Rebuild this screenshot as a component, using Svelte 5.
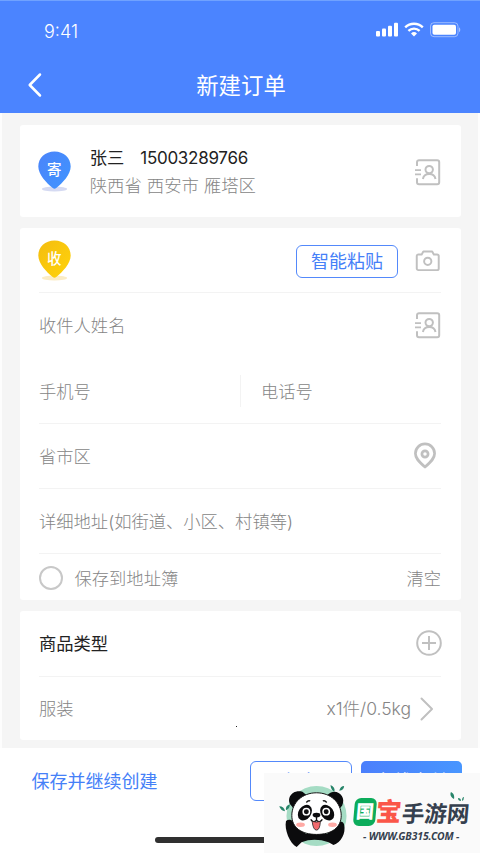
<script lang="ts">
  // New shipping order form: sender card, recipient form, goods list
  // and the action bar pinned at the bottom of the screen.
  const sender = {
    name: '张三',
    phone: '15003289766',
    address: '陕西省 西安市 雁塔区',
  };
  const goods = { kind: '服装', summary: 'x1件/0.5kg' };
</script>

{#snippet contactIcon()}
  <svg class="icon contact" viewBox="0 0 28 28" aria-hidden="true">
    <path d="M4 8V4.200a2 2 0 0 1 2-2h18.200a2 2 0 0 1 2 2v20a2 2 0 0 1-2 2H6a2 2 0 0 1-2-2v-4" />
    <path d="M2 12.200h6M2 16.400h6" stroke-width="1.8" />
    <circle cx="16.200" cy="11.600" r="3.700" />
    <path d="M9.900 21c.6-3.200 2.800-4.900 6.300-4.900s5.700 1.700 6.300 4.900" />
  </svg>
{/snippet}

{#snippet pin(label: string, kind: string)}
  <div class="pin {kind}">
    <svg viewBox="0 0 34 43" aria-hidden="true">
      <defs>
        <linearGradient id="pin-{kind}" x1="0" y1="0" x2="1" y2="1">
          <stop class="from" offset="0" />
          <stop class="to" offset="1" />
        </linearGradient>
      </defs>
      <ellipse class="shadow" cx="17" cy="39.200" rx="13" ry="2.700" />
      <path d="M17 .5C7.300.5.300 7.300.300 15.900c0 8.400 8.400 16.900 14.900 22.300q1.800 1.300 3.600 0c6.500-5.400 14.900-13.900 14.900-22.300C33.700 7.300 26.700.5 17 .5Z" fill="url(#pin-{kind})" />
    </svg>
    <span>{label}</span>
  </div>
{/snippet}

<div class="screen">
  <header>
    <div class="status">
      <time>9:41</time>
      <svg width="86" height="18" viewBox="0 0 86 18" aria-hidden="true">
        <g fill="#fff">
          <rect x="1" y="10" width="4" height="5.500" rx="1" />
          <rect x="7" y="7.500" width="4" height="8" rx="1" />
          <rect x="13" y="4.700" width="4" height="10.800" rx="1" />
          <rect x="19" y="1.800" width="4" height="13.700" rx="1" />
          <path d="m39 15.500-3-3a4.300 4.300 0 0 1 6 0Z" />
          <rect x="57.500" y="3.700" width="23.500" height="10" rx="1.800" />
          <path d="M84 6.300c1.700.8 1.700 4.200 0 5Z" opacity=".5" />
        </g>
        <path d="M30.200 6.300a12.800 12.800 0 0 1 17.600 0M33.400 9.800a8.200 8.200 0 0 1 11.200 0" fill="none" stroke="#fff" stroke-width="2.400" />
        <rect x="55.500" y="1.700" width="27.500" height="14" rx="3.500" fill="none" stroke="#fff" opacity=".45" />
      </svg>
    </div>
    <nav>
      <svg class="back" viewBox="0 0 16 26" aria-label="返回">
        <path d="M13 2.500 2.700 13 13 23.500" />
      </svg>
      <h1>新建订单</h1>
    </nav>
  </header>

  <main>
    <section class="card sender">
      {@render pin('寄', 'blue')}
      <div class="who">
        <p class="name"><span>{sender.name}</span><span>{sender.phone}</span></p>
        <p class="address">{sender.address}</p>
      </div>
      {@render contactIcon()}
    </section>

    <section class="card recipient">
      <div class="row top">
        {@render pin('收', 'yellow')}
        <button class="outline paste">智能粘贴</button>
        <svg class="icon camera" viewBox="0 0 26 22" aria-hidden="true">
          <path d="M3.500 4.500h3.300l1.700-3h9l1.700 3h3.300a1.700 1.700 0 0 1 1.700 1.700v12.600a1.700 1.700 0 0 1-1.700 1.700h-19a1.700 1.700 0 0 1-1.700-1.700V6.200a1.700 1.700 0 0 1 1.700-1.700Z" />
          <circle cx="13" cy="11.500" r="3.700" />
        </svg>
      </div>
      <div class="row plain">
        <span>收件人姓名</span>
        {@render contactIcon()}
      </div>
      <div class="row split">
        <span>手机号</span>
        <span>电话号</span>
      </div>
      <div class="row">
        <span>省市区</span>
        <svg class="icon place" viewBox="0 0 24 28" aria-hidden="true">
          <path d="M12 1.900A9.600 9.600 0 0 0 2.400 11.500c0 4.300 2.700 7.500 9.600 13.600 6.900-6.100 9.600-9.300 9.600-13.600A9.600 9.600 0 0 0 12 1.900Z" />
          <circle cx="12" cy="12" r="3.100" />
        </svg>
      </div>
      <div class="row">
        <span>详细地址(如街道、小区、村镇等)</span>
      </div>
      <div class="row save">
        <label><i></i>保存到地址簿</label>
        <span>清空</span>
      </div>
    </section>

    <section class="card goods">
      <div class="row">
        <strong>商品类型</strong>
        <svg class="icon plus" viewBox="0 0 26 26" aria-hidden="true">
          <circle cx="13" cy="13" r="11.800" />
          <path d="M13 6v14M6 13h14" />
        </svg>
      </div>
      <div class="row last">
        <span>{goods.kind}</span>
        <div class="summary">
          {goods.summary}
          <svg class="icon next" viewBox="0 0 14 24" aria-hidden="true">
            <path d="m1.500 1.500 10.500 10.500-10.500 10.500" />
          </svg>
        </div>
      </div>
      <i class="speck"></i>
    </section>
  </main>

  <footer>
    <button class="link">保存并继续创建</button>
    <button class="outline">保存</button>
    <button class="primary">在线支付</button>
    <div class="home"></div>
  </footer>

  <!-- site badge laid over the bottom corner -->
  <aside>
    <svg class="panda" viewBox="0 0 70 64" aria-hidden="true">
      <circle cx="34.500" cy="31" r="31" fill="#a5dcc4" />
      <path d="M53 6q1-5-4-7 0 5 4 7ZM58 5q1-5 5-5 0 4-5 5ZM2 26q-4 0-6-5 5 0 6 5ZM3 25q-1-5 4-6 0 4-4 6Z" fill="#28856a" />
      <g fill="#0b0b0d">
        <path d="M9 21C2 14 9 3 20 6l5 4-13 15ZM46 9C54 1 66 10 61 20l-4 5Z" />
        <path d="M3 36c4-3 9 0 10 6l10 7h23l8-8c1-5 8-6 9-1 2 9-3 18-11 21l-5-3q-15-5-28 0l-5 5C7 59 1 45 3 36Z" />
      </g>
      <path d="M34.500 7C20 7 9 17 9 30.500 9 43 19 50 34.500 50S60 43 60 30.500C60 17 49 7 34.500 7Z" fill="#fff" stroke="#111" />
      <g fill="#0b0b0d">
        <ellipse cx="22.500" cy="27.500" rx="6.500" ry="8.700" transform="rotate(35 22.500 27.500)" />
        <ellipse cx="45.500" cy="27.500" rx="6.500" ry="8.700" transform="rotate(-35 45.500 27.500)" />
        <ellipse cx="34.500" cy="30" rx="4" ry="2.500" />
      </g>
      <g fill="#101012" stroke="#fff" stroke-width="1.500">
        <circle cx="24" cy="26.500" r="3.300" />
        <circle cx="44.500" cy="26.500" r="3.300" />
      </g>
      <path d="M34.500 32v3m-6-.5q2.500 4 6 .8 3.500 3.200 6-.8M24 17q2-2.500 4-1.500M41 15.500q2-1 4 1.500" fill="none" stroke="#111" stroke-width="1.400" />
      <path d="M30 36.500q4.500 1.500 8.500 0-.5 9-4 9t-4.500-9Z" fill="#f26b6e" stroke="#222" stroke-width=".8" />
      <g fill="#ffaaa5">
        <ellipse cx="18" cy="40" rx="4.500" ry="2.300" />
        <ellipse cx="51" cy="40" rx="4.500" ry="2.300" />
      </g>
    </svg>
    <div class="brand">
      <div class="title">
        <b class="tile">国</b><b class="red">宝</b><span>手游网</span>
      </div>
      <div class="url">- WWW.GB315.COM -</div>
      <svg class="leaf" viewBox="0 0 14 10" aria-hidden="true">
        <path d="M4 7Q-1 4 1 0q4 2 3 7ZM8 6q3 0 3 3-3 0-3-3Zm4 3q0-4 2-4 0 3-2 4Z" fill="#28856a" />
      </svg>
    </div>
  </aside>
</div>

<style>
  :global(body) {
    margin: 0;
  }
  .screen {
    --blue: #4b84ff;
    --grey: #858585;
    position: relative;
    box-sizing: border-box;
    width: 480px;
    height: 853px;
    overflow: hidden;
    display: flex;
    flex-direction: column;
    background: #f5f5f5;
    color: var(--grey);
    font: 300 17.3px/26px Inter, 'Noto Sans CJK SC', sans-serif;
  }
  h1, p {
    margin: 0;
  }
  button {
    box-sizing: border-box;
    padding: 2px 0 0;
    border: 0;
    background: none;
    font: 400 18px/26px Inter, 'Noto Sans CJK SC', sans-serif;
    color: #4580f8;
  }

  header {
    height: 113px;
    box-sizing: border-box;
    border-top: 1px solid #70a2ff;
    background: var(--blue);
    color: #fff;
  }
  .status {
    display: flex;
    justify-content: space-between;
    align-items: center;
    height: 60px;
    padding: 0 19px 0 44px;
  }
  .status time {
    padding-top: 2px;
    font-size: 18px;
    font-weight: 300;
  }
  .status svg {
    margin-bottom: 2px;
  }
  nav {
    display: grid;
    grid-template-columns: 60px 1fr 60px;
    align-items: center;
    height: 48px;
  }
  .back {
    width: 16px;
    height: 26px;
    margin-left: 27px;
    fill: none;
    stroke: #fff;
    stroke-width: 2.5;
    stroke-linecap: round;
    stroke-linejoin: round;
  }
  h1 {
    padding: 2px 0 0 2px;
    text-align: center;
    font-size: 22.4px;
    font-weight: 400;
    line-height: 32px;
  }

  main {
    flex: 1;
    display: flex;
    flex-direction: column;
    gap: 11px;
    box-sizing: border-box;
    padding: 12.500px 17px 8px 18px;
    border: solid #fdfdfd;
    border-width: 0 2px;
  }
  .card {
    position: relative;
    box-sizing: border-box;
    border-radius: 3px;
    padding: 0 20px 0 19px;
    background: #fff;
  }
  .sender {
    display: flex;
    align-items: center;
    height: 92px;
  }
  .sender .contact {
    margin-top: 1px;
  }
  .who {
    flex: 1;
    margin-left: 18.500px;
    padding-top: 2px;
  }
  .name {
    display: flex;
    gap: 16px;
    line-height: 28px;
    color: #222;
    font-weight: 400;
  }
  .name span + span {
    font-size: 17px;
    letter-spacing: -0.28px;
  }
  .address {
    line-height: 28px;
    font-size: 17.400px;
  }

  .pin {
    position: relative;
    width: 33px;
    height: 41.700px;
    margin: 2px 0 0 -0.800px;
  }
  .pin svg {
    display: block;
    width: 100%;
    height: 100%;
  }
  .pin span {
    position: absolute;
    inset: 6px 1px auto 0;
    text-align: center;
    font-size: 14.500px;
    font-weight: 500;
    color: #fff;
  }
  .blue .from { stop-color: #4b84fa; }
  .blue .to { stop-color: #3f94ff; }
  .blue .shadow { fill: #d5daf2; }
  .yellow .from { stop-color: #f4bd10; }
  .yellow .to { stop-color: #ffd30a; }
  .yellow .shadow { fill: #fbecc5; }

  .icon {
    flex: none;
    fill: none;
    stroke: #c0c0c0;
    stroke-width: 2;
    stroke-linecap: butt;
    stroke-linejoin: round;
  }
  .contact { width: 28px; height: 28px; margin-right: 0.500px; }
  .camera { width: 25.500px; height: 21.600px; margin: 2px 0.500px 0 0; }
  .place { width: 24px; height: 28px; margin: 1px 4px 0 0; stroke-width: 2.700; }
  .plus { width: 26px; height: 26px; margin-right: -1px; }
  .next { width: 14px; height: 24px; margin-right: 7px; stroke-linecap: round; }

  .row {
    display: flex;
    align-items: center;
    justify-content: space-between;
    box-sizing: border-box;
    height: 65.300px;
    border-bottom: 1px solid #f3f3f3;
  }
  .row > span, .row strong, .summary, label {
    padding-top: 2px;
  }
  .row.plain, .row.last, .row.save {
    border-bottom-color: transparent;
  }
  .recipient .top {
    height: 65px;
  }
  .recipient {
    height: 372px;
  }
  .row.save {
    height: 48px;
  }
  .outline {
    border: 1.500px solid #5389fb;
    border-radius: 6px;
    background: #fff;
  }
  .paste {
    width: 102px;
    height: 33px;
    margin: 2px 17px 0 auto;
    line-height: 28px;
  }
  .split span {
    flex: 0 0 50%;
    box-sizing: border-box;
    line-height: 30px;
  }
  .split span + span {
    border-left: 1px solid #f3f3f3;
    padding-left: 20px;
  }
  label {
    display: flex;
    align-items: center;
    gap: 11.500px;
  }
  label i {
    box-sizing: border-box;
    width: 24px;
    height: 24px;
    margin-top: -1px;
    border: 2px solid #c8c8c8;
    border-radius: 50%;
  }

  .goods {
    height: 129px;
  }
  .goods strong {
    font-weight: 400;
    color: #222;
  }
  .goods .last {
    height: 64px;
  }
  .summary {
    display: flex;
    align-items: center;
    gap: 9px;
    font-size: 17.500px;
  }
  .speck {
    position: absolute;
    left: 216px;
    top: 115px;
    width: 1px;
    height: 1px;
    background: #222;
  }

  footer {
    position: relative;
    display: flex;
    align-items: flex-start;
    box-sizing: border-box;
    height: 105px;
    padding: 13px 18px 0 31.500px;
    background: #fff;
  }
  footer button {
    width: 102px;
    height: 40px;
  }
  footer .link {
    width: auto;
    margin-right: auto;
  }
  footer .outline {
    padding-top: 1px;
  }
  .primary {
    width: 101px;
    margin-left: 9px;
    border-radius: 5px;
    background: linear-gradient(90deg, #4b7ffc, #4896ff);
    color: #fff;
  }
  .home {
    position: absolute;
    left: 155px;
    bottom: 10px;
    width: 170px;
    height: 6px;
    border-radius: 3px;
    background: #303030;
  }

  aside {
    position: absolute;
    right: 0;
    bottom: 0;
    display: flex;
    box-sizing: border-box;
    width: 216px;
    height: 80px;
    background: #fafafa;
  }
  .panda {
    flex: none;
    width: 68px;
    height: 62px;
    margin: 13px 0 0 19px;
    overflow: visible;
  }
  .brand {
    position: relative;
    padding-top: 24px;
  }
  .title {
    display: flex;
    align-items: center;
    height: 30px;
    transform: skewX(-5deg);
    white-space: nowrap;
    color: #35404e;
    font-weight: 900;
  }
  .tile, .red {
    flex: none;
    text-align: center;
    font-weight: 900;
  }
  .tile {
    box-sizing: border-box;
    width: 22px;
    height: 28px;
    margin-left: 3px;
    border-radius: 6px;
    background: #0cac5b;
    color: #fff;
    font-size: 18px;
    line-height: 27px;
  }
  .red {
    width: 25px;
    font-size: 25.500px;
    line-height: 28px;
    color: #fa5648;
  }
  .title span {
    font-size: 22.500px;
    font-weight: 700;
    padding: 4px 0 0 1px;
  }
  .url {
    margin: 1px 0 0 12px;
    font: italic 700 10.400px/16px 'Noto Sans', sans-serif;
    letter-spacing: -0.1px;
    color: #35404e;
    white-space: nowrap;
  }
  .leaf {
    position: absolute;
    left: 99px;
    top: 19px;
    width: 14px;
    height: 10px;
  }
</style>
